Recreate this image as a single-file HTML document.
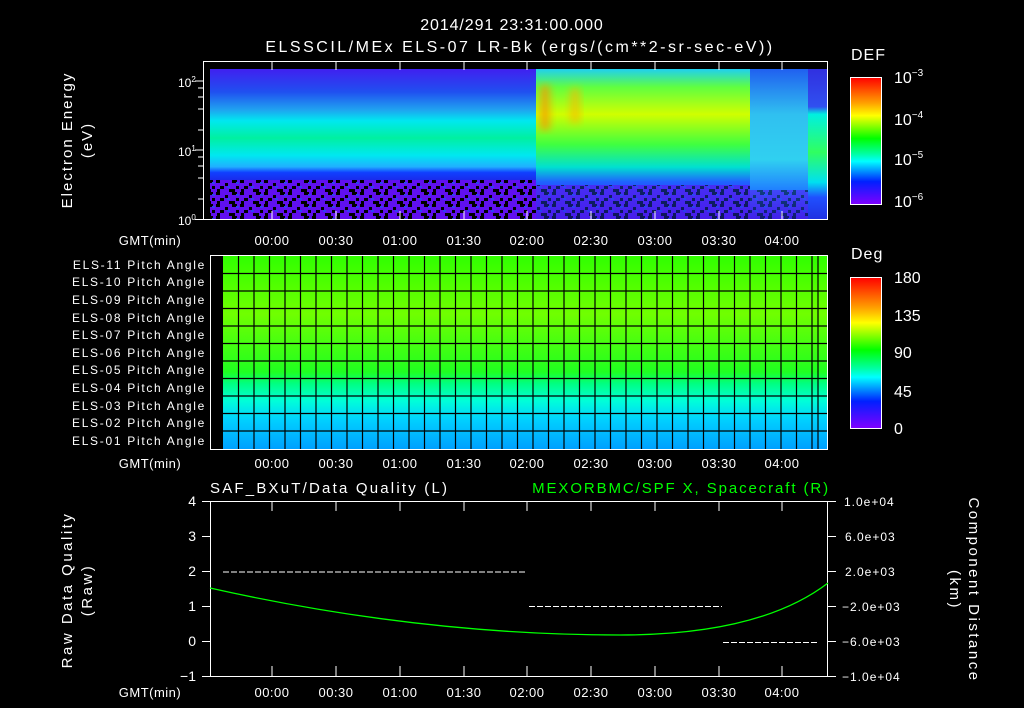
<!DOCTYPE html>
<html><head><meta charset="utf-8"><style>
html,body{margin:0;padding:0;background:#000;width:1024px;height:708px;overflow:hidden}
svg text{font-family:"Liberation Sans",sans-serif;fill:#fff}
</style></head><body>
<svg width="1024" height="708" viewBox="0 0 1024 708" xmlns="http://www.w3.org/2000/svg">
<defs>
<linearGradient id="cb" x1="0" y1="0" x2="0" y2="1">
<stop offset="0" stop-color="#ff0000"/><stop offset="0.2" stop-color="#ffa000"/><stop offset="0.3" stop-color="#ffff00"/><stop offset="0.48" stop-color="#00ff00"/><stop offset="0.6" stop-color="#00ffa0"/><stop offset="0.66" stop-color="#00ffff"/><stop offset="0.82" stop-color="#0020ff"/><stop offset="1" stop-color="#8000ff"/>
</linearGradient>
<linearGradient id="s1" x1="0" y1="0" x2="0" y2="1">
<stop offset="0" stop-color="#4020f0"/><stop offset="0.2" stop-color="#2050f0"/><stop offset="0.35" stop-color="#20a0f0"/><stop offset="0.45" stop-color="#00e8f0"/><stop offset="0.6" stop-color="#00f0a0"/><stop offset="0.75" stop-color="#00e8f0"/><stop offset="0.85" stop-color="#20b0ff"/><stop offset="0.9" stop-color="#1040ff"/><stop offset="1" stop-color="#2020e0"/>
</linearGradient>
<linearGradient id="s2" x1="0" y1="0" x2="0" y2="1">
<stop offset="0" stop-color="#20d0f0"/><stop offset="0.12" stop-color="#60ff40"/><stop offset="0.3" stop-color="#d0ff00"/><stop offset="0.5" stop-color="#40ff40"/><stop offset="0.65" stop-color="#00e0d0"/><stop offset="0.75" stop-color="#2060ff"/><stop offset="1" stop-color="#2030e0"/>
</linearGradient>
<linearGradient id="s3" x1="0" y1="0" x2="0" y2="1">
<stop offset="0" stop-color="#2060f0"/><stop offset="0.3" stop-color="#30c0f0"/><stop offset="0.6" stop-color="#30d0f0"/><stop offset="0.8" stop-color="#2080ff"/><stop offset="1" stop-color="#2030e0"/>
</linearGradient>
<linearGradient id="s4" x1="0" y1="0" x2="0" y2="1">
<stop offset="0" stop-color="#3030e0"/><stop offset="0.25" stop-color="#3050f0"/><stop offset="0.3" stop-color="#00f0e0"/><stop offset="0.55" stop-color="#30ff60"/><stop offset="0.75" stop-color="#00e0f0"/><stop offset="0.85" stop-color="#2050ff"/><stop offset="1" stop-color="#2030e0"/>
</linearGradient>
<pattern id="nz" width="24" height="12" patternUnits="userSpaceOnUse">
<rect width="24" height="12" fill="#6010f0"/>
<rect x="0" y="0" width="4" height="3" fill="#000"/><rect x="9" y="3" width="3" height="3" fill="#000"/><rect x="16" y="0" width="5" height="3" fill="#000"/><rect x="4" y="6" width="4" height="3" fill="#000"/><rect x="13" y="9" width="6" height="3" fill="#000"/><rect x="20" y="6" width="3" height="3" fill="#000"/><rect x="1" y="9" width="3" height="3" fill="#000"/><rect x="11" y="6" width="3" height="2" fill="#3040f0"/><rect x="20" y="2" width="3" height="2" fill="#3040f0"/>
</pattern>
<linearGradient id="pa" x1="0" y1="0" x2="0" y2="1">
<stop offset="0" stop-color="#30ff00"/><stop offset="0.3" stop-color="#70ff00"/><stop offset="0.6" stop-color="#20ff20"/><stop offset="0.66" stop-color="#00ff80"/><stop offset="0.75" stop-color="#00ffd8"/><stop offset="0.85" stop-color="#00d0ff"/><stop offset="1" stop-color="#00a0ff"/>
</linearGradient>
<filter id="bl"><feGaussianBlur stdDeviation="4"/></filter>
</defs>

<text x="512" y="30" font-size="16" text-anchor="middle" letter-spacing="0.9">2014/291 23:31:00.000</text>
<text x="520" y="52" font-size="16" text-anchor="middle" letter-spacing="2.5">ELSSCIL/MEx ELS-07 LR-Bk  (ergs/(cm**2-sr-sec-eV))</text>

<rect x="210" y="69" width="326" height="115" fill="url(#s1)"/>
<rect x="210" y="180" width="326" height="40" fill="url(#nz)"/>
<rect x="536" y="69" width="214" height="151" fill="url(#s2)"/>
<rect x="536" y="185" width="214" height="35" fill="url(#nz)" opacity="0.6"/>
<g filter="url(#bl)">
<rect x="540" y="85" width="10" height="45" fill="#ff9000" opacity="0.7"/>
<rect x="570" y="88" width="10" height="35" fill="#ffb000" opacity="0.6"/>
</g>
<rect x="750" y="69" width="58" height="151" fill="url(#s3)"/>
<rect x="750" y="190" width="58" height="30" fill="url(#nz)" opacity="0.5"/>
<rect x="808" y="69" width="20" height="151" fill="url(#s4)"/>
<rect x="203.5" y="61.5" width="624" height="158" fill="none" stroke="#fff"/>
<g stroke="#fff">
<line x1="195" y1="81" x2="203" y2="81"/><line x1="195" y1="150" x2="203" y2="150"/><line x1="195" y1="219.5" x2="203" y2="219.5"/>
<line x1="198" y1="88" x2="203" y2="88"/><line x1="198" y1="97" x2="203" y2="97"/><line x1="198" y1="109" x2="203" y2="109"/><line x1="198" y1="130" x2="203" y2="130"/><line x1="198" y1="157" x2="203" y2="157"/><line x1="198" y1="166" x2="203" y2="166"/><line x1="198" y1="178" x2="203" y2="178"/><line x1="198" y1="199" x2="203" y2="199"/>
<path d="M272 62V70M336 62V70M400 62V70M464 62V70M527 62V70M591 62V70M655 62V70M719 62V70M782 62V70M272 219V211M336 219V211M400 219V211M464 219V211M527 219V211M591 219V211M655 219V211M719 219V211M782 219V211"/>
</g>
<text transform="translate(72,140) rotate(-90)" font-size="15" text-anchor="middle" letter-spacing="2">Electron Energy</text>
<text transform="translate(92,140) rotate(-90)" font-size="15" text-anchor="middle" letter-spacing="2">(eV)</text>
<text x="178" y="87" font-size="12">10<tspan dy="-5" font-size="8">2</tspan></text>
<text x="178" y="156" font-size="12">10<tspan dy="-5" font-size="8">1</tspan></text>
<text x="178" y="225" font-size="12">10<tspan dy="-5" font-size="8">0</tspan></text>
<g font-size="13" text-anchor="middle" letter-spacing="0.5">
<text x="150" y="245">GMT(min)</text>
<text x="272" y="245">00:00</text><text x="336" y="245">00:30</text><text x="400" y="245">01:00</text><text x="464" y="245">01:30</text><text x="527" y="245">02:00</text><text x="591" y="245">02:30</text><text x="655" y="245">03:00</text><text x="719" y="245">03:30</text><text x="782" y="245">04:00</text>
</g>
<text x="851" y="60" font-size="16" letter-spacing="1">DEF</text>
<rect x="850.5" y="77.5" width="31" height="127" fill="url(#cb)" stroke="#fff"/>
<g font-size="16"><text x="894" y="83">10<tspan dy="-7" font-size="10">−3</tspan></text><text x="894" y="125">10<tspan dy="-7" font-size="10">−4</tspan></text><text x="894" y="165">10<tspan dy="-7" font-size="10">−5</tspan></text><text x="894" y="207">10<tspan dy="-7" font-size="10">−6</tspan></text></g>

<rect x="210" y="256" width="618" height="193" fill="#000"/>
<rect x="223" y="256" width="605" height="193" fill="url(#pa)"/>
<g stroke="#000" stroke-width="1.2">
<path d="M223 273.5H828M223 291H828M223 308.5H828M223 326H828M223 343.5H828M223 361H828M223 378.5H828M223 396H828M223 413.5H828M223 431H828"/>
<path d="M238.5 256V449M254 256V449M269.5 256V449M285 256V449M300.5 256V449M316 256V449M331.5 256V449M347 256V449M362.5 256V449M378 256V449M393.5 256V449M409 256V449M424.5 256V449M440 256V449M455.5 256V449M471 256V449M486.5 256V449M502 256V449M517.5 256V449M533 256V449M548.5 256V449M564 256V449M579.5 256V449M595 256V449M610.5 256V449M626 256V449M641.5 256V449M657 256V449M672.5 256V449M688 256V449M703.5 256V449M719 256V449M734.5 256V449M750 256V449M765.5 256V449M781 256V449M796.5 256V449M812 256V449M818 256V449"/>
</g>
<rect x="210.5" y="255.5" width="617" height="194" fill="none" stroke="#fff"/>
<g font-size="12" text-anchor="end" letter-spacing="1.7">
<text x="206" y="269">ELS-11 Pitch Angle</text><text x="206" y="286">ELS-10 Pitch Angle</text><text x="206" y="304">ELS-09 Pitch Angle</text><text x="206" y="322">ELS-08 Pitch Angle</text><text x="206" y="339">ELS-07 Pitch Angle</text><text x="206" y="357">ELS-06 Pitch Angle</text><text x="206" y="374">ELS-05 Pitch Angle</text><text x="206" y="392">ELS-04 Pitch Angle</text><text x="206" y="410">ELS-03 Pitch Angle</text><text x="206" y="427">ELS-02 Pitch Angle</text><text x="206" y="445">ELS-01 Pitch Angle</text>
</g>
<g font-size="13" text-anchor="middle" letter-spacing="0.5">
<text x="150" y="468">GMT(min)</text>
<text x="272" y="468">00:00</text><text x="336" y="468">00:30</text><text x="400" y="468">01:00</text><text x="464" y="468">01:30</text><text x="527" y="468">02:00</text><text x="591" y="468">02:30</text><text x="655" y="468">03:00</text><text x="719" y="468">03:30</text><text x="782" y="468">04:00</text>
</g>
<text x="851" y="259" font-size="16" letter-spacing="1">Deg</text>
<rect x="850.5" y="277.5" width="31" height="151" fill="url(#cb)" stroke="#fff"/>
<g font-size="16"><text x="894" y="283">180</text><text x="894" y="321">135</text><text x="894" y="358">90</text><text x="894" y="397">45</text><text x="894" y="434">0</text></g>

<text x="210" y="493" font-size="15" letter-spacing="2.2">SAF_BXuT/Data Quality (L)</text>
<text x="830" y="493" font-size="15" style="fill:#00ff00" text-anchor="end" letter-spacing="1.9">MEXORBMC/SPF X, Spacecraft (R)</text>
<rect x="210.5" y="501.5" width="617" height="175" fill="none" stroke="#fff"/>
<g stroke="#fff">
<path d="M202 501.5H210M202 536.5H210M202 571.5H210M202 606.5H210M202 641.5H210M202 676.5H210"/>
<path d="M828 501.5H836M828 536.5H836M828 571.5H836M828 606.5H836M828 641.5H836M828 676.5H836"/>
<path d="M272 501V511M336 501V511M400 501V511M464 501V511M527 501V511M591 501V511M655 501V511M719 501V511M782 501V511M272 676V666M336 676V666M400 676V666M464 676V666M527 676V666M591 676V666M655 676V666M719 676V666M782 676V666"/>
</g>
<g stroke="#fff" stroke-dasharray="6 2">
<path d="M223 572H526"/><path d="M529 606.5H722"/><path d="M723 642.5H817"/>
</g>
<path d="M210 588 Q420 635 620 635 Q760 635 828 583" fill="none" stroke="#00ff00" stroke-width="1.3"/>
<g font-size="14" text-anchor="end">
<text x="196" y="506">4</text><text x="196" y="541">3</text><text x="196" y="576">2</text><text x="196" y="611">1</text><text x="196" y="646">0</text><text x="196" y="681">−1</text>
</g>
<g font-size="12" letter-spacing="1">
<text x="844" y="506">1.0e+04</text><text x="845" y="541">6.0e+03</text><text x="845" y="576">2.0e+03</text><text x="842" y="611">−2.0e+03</text><text x="842" y="646">−6.0e+03</text><text x="842" y="681">−1.0e+04</text>
</g>
<text transform="translate(72,590) rotate(-90)" font-size="15" text-anchor="middle" letter-spacing="2.5">Raw Data Quality</text>
<text transform="translate(92,590) rotate(-90)" font-size="15" text-anchor="middle" letter-spacing="2.5">(Raw)</text>
<text transform="translate(969,590) rotate(90)" font-size="15" text-anchor="middle" letter-spacing="2.5">Component Distance</text>
<text transform="translate(950,590) rotate(90)" font-size="15" text-anchor="middle" letter-spacing="2.5">(km)</text>
<g font-size="13" text-anchor="middle" letter-spacing="0.5">
<text x="150" y="697">GMT(min)</text>
<text x="272" y="697">00:00</text><text x="336" y="697">00:30</text><text x="400" y="697">01:00</text><text x="464" y="697">01:30</text><text x="527" y="697">02:00</text><text x="591" y="697">02:30</text><text x="655" y="697">03:00</text><text x="719" y="697">03:30</text><text x="782" y="697">04:00</text>
</g>
</svg>
</body></html>
